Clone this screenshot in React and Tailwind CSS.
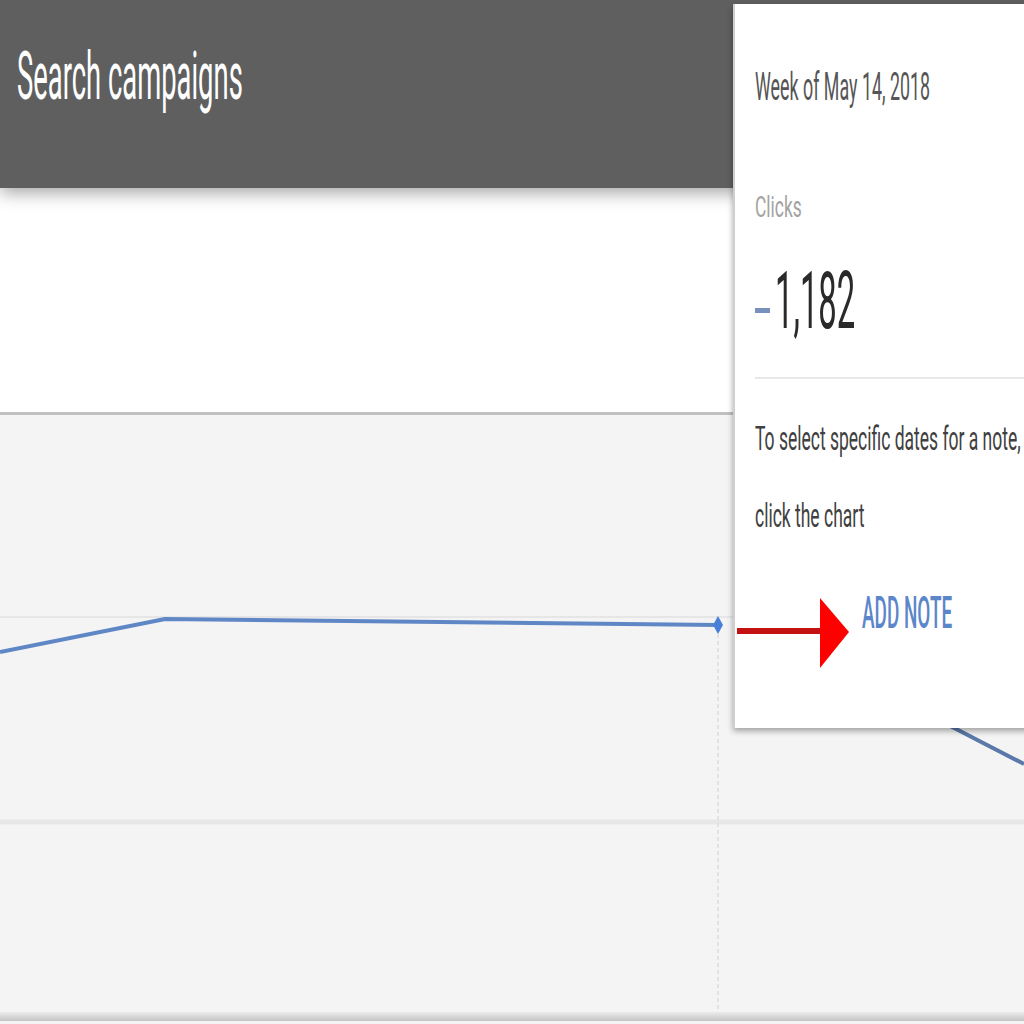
import React from "react";

function Sq({ scale, children, className = "" }) {
  return (
    <span className={"inline-block origin-left whitespace-nowrap " + scale + " " + className}>
      {children}
    </span>
  );
}

export default function App() {
  return (
    <div className="relative w-[1024px] h-[1024px] overflow-hidden bg-[#f4f4f4] font-['Roboto',sans-serif]">
      {/* Header */}
      <div className="relative z-10 h-[188px] bg-[#5f5f5f] pl-[17px] pt-[44px] shadow-[0_5px_16px_rgba(0,0,0,0.35)]">
        <div className="text-[66px] leading-none text-white">
          <Sq scale="scale-x-[0.415]">Search campaigns</Sq>
        </div>
      </div>

      {/* White band */}
      <div className="relative h-[227px] bg-white border-b-[3px] border-[#c0c0c0] shadow-[0_2px_6px_rgba(0,0,0,0.18)]" />

      {/* Chart area */}
      <div className="relative h-[597px] bg-[#f4f4f4]">
        <svg className="absolute inset-0" width="1024" height="597" viewBox="0 0 1024 597">
          <line x1="0" y1="202" x2="1024" y2="202" stroke="#e6e6e6" strokeWidth="2" />
          <line x1="0" y1="407" x2="1024" y2="407" stroke="#e7e7e7" strokeWidth="5" />
          <line x1="718" y1="212" x2="718" y2="597" stroke="#dcdcdc" strokeWidth="1.5" strokeDasharray="4 3" />
          <polyline
            points="0,237 165,204 718,210"
            fill="none"
            stroke="#5f87c6"
            strokeWidth="4"
            strokeLinejoin="round"
          />
          <line x1="900" y1="285" x2="1024" y2="349" stroke="#5a79aa" strokeWidth="4" />
          <polygon points="718,201 723,210 718,219 713,210" fill="#4a80d8" />
        </svg>
      </div>

      {/* Bottom edge */}
      <div className="h-[9px] bg-gradient-to-b from-[#ececec] to-[#c4c4c4]" />

      {/* Popup card */}
      <div className="absolute z-20 left-[733px] top-[4px] w-[320px] h-[724px] bg-white border-l-2 border-[#cfcfcf] shadow-[0_3px_6px_rgba(0,0,0,0.35)] pl-[20px] pt-[64px] flex flex-col items-start">
        <div className="text-[38px] leading-none text-[#555555]">
          <Sq scale="scale-x-[0.47]">Week of May 14, 2018</Sq>
        </div>
        <div className="mt-[86px] text-[30px] leading-none text-[#a3a3a3]">
          <Sq scale="scale-x-[0.58]">Clicks</Sq>
        </div>
        <div className="mt-[39px] flex items-start">
          <div className="mt-[47px] w-[15px] h-[5px] bg-[#7890bb]" />
          <div className="ml-[5px] text-[80px] leading-none text-[#2a2a2a]">
            <Sq scale="scale-x-[0.41]">1,182</Sq>
          </div>
        </div>
        <div className="mt-[36px] w-full h-[2px] bg-[#e8e8e8]" />
        <div className="mt-[43px] text-[33px] leading-none text-[#404040]">
          <Sq scale="scale-x-[0.53]">To select specific dates for a note,</Sq>
        </div>
        <div className="mt-[44px] text-[33px] leading-none text-[#404040]">
          <Sq scale="scale-x-[0.53]">click the chart</Sq>
        </div>
        <div className="mt-[59px] ml-[107px] text-[44px] leading-none font-medium text-[#5b86c9]">
          <Sq scale="scale-x-[0.43]">ADD NOTE</Sq>
        </div>
      </div>

      {/* Red arrow */}
      <svg className="absolute z-30 left-0 top-0" width="1024" height="1024" viewBox="0 0 1024 1024" pointerEvents="none">
        <rect x="737" y="628" width="86" height="6" fill="#c41212" />
        <polygon points="820,598 849,632 820,668" fill="#ff0000" />
      </svg>
    </div>
  );
}
